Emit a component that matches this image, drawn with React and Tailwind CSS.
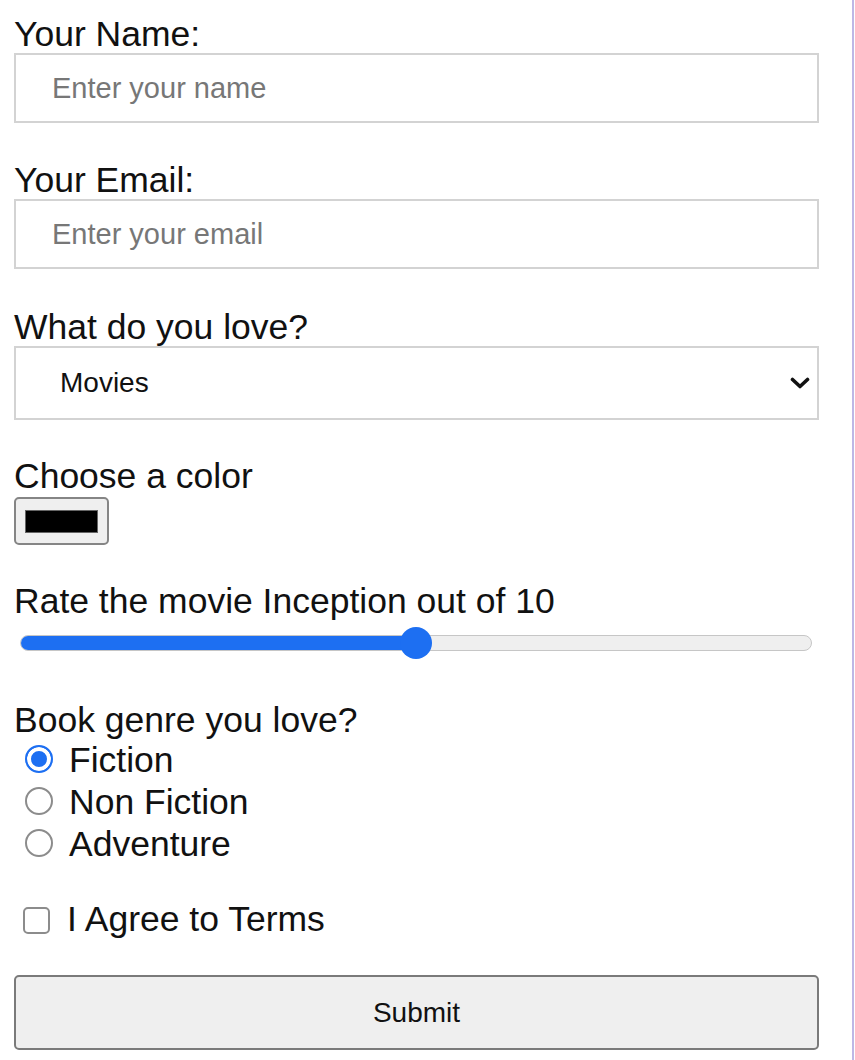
import { useState } from "react";

const Label = ({ children, className = "" }) => (
  <label className={`block h-[38px] leading-[38px] text-[35.5px] text-[#111] ${className}`}>
    {children}
  </label>
);

const Radio = ({ name, label, checked, onChange }) => (
  <label className="flex items-center h-[42px] ml-[11px]">
    <input
      type="radio"
      name={name}
      checked={checked}
      onChange={onChange}
      className="appearance-none w-[28px] h-[28px] rounded-full border-2 border-[#8c8c8c] bg-white checked:border-[#1d6ff2] checked:bg-[#1d6ff2] checked:shadow-[inset_0_0_0_4px_white]"
    />
    <span className="ml-[16px] mt-[3px] text-[35.5px] text-[#111]">{label}</span>
  </label>
);

export default function App() {
  const [genre, setGenre] = useState("fiction");
  const [agree, setAgree] = useState(false);
  const rating = 5;
  const pct = (rating / 10) * 100;

  return (
    <div
      className="w-[854px] h-[1060px] bg-white border-r-2 border-[#bdb7e6] overflow-hidden"
      style={{ fontFamily: '"Liberation Sans", Arial, sans-serif' }}
    >
      <form className="w-[819px] pl-[14px] pt-[15px] flex flex-col">
        {/* name */}
        <Label>Your Name:</Label>
        <input
          type="text"
          placeholder="Enter your name"
          className="h-[70px] w-full border-2 border-[#d3d3d3] pl-[36px] text-[29px] placeholder:text-[#777] outline-none"
        />

        {/* email */}
        <Label className="mt-[38px]">Your Email:</Label>
        <input
          type="email"
          placeholder="Enter your email"
          className="h-[70px] w-full border-2 border-[#d3d3d3] pl-[36px] text-[29px] placeholder:text-[#777] outline-none"
        />

        {/* select */}
        <Label className="mt-[39px]">What do you love?</Label>
        <div className="relative">
          <select className="appearance-none h-[74px] w-full border-2 border-[#d3d3d3] bg-white pl-[44px] text-[28px] text-[#111] outline-none">
            <option>Movies</option>
            <option>Books</option>
            <option>Music</option>
          </select>
          <svg
            className="absolute right-[9px] top-[31px] pointer-events-none"
            width="20"
            height="12"
            viewBox="0 0 20 12"
          >
            <polyline points="2.5,2.5 10,9.5 17.5,2.5" fill="none" stroke="#111" strokeWidth="3.6" strokeLinecap="round" strokeLinejoin="round" />
          </svg>
        </div>

        {/* color */}
        <Label className="mt-[37px]">Choose a color</Label>
        <button
          type="button"
          className="mt-[2px] w-[95px] h-[48px] rounded-[5px] border-2 border-[#858585] bg-[#efefef] flex items-center justify-center"
        >
          <span className="block w-[73px] h-[23px] bg-black border border-[#666]" />
        </button>

        {/* range */}
        <Label className="mt-[37px]">Rate the movie Inception out of 10</Label>
        <div className="relative mt-[6px] h-[34px] ml-[6px] w-[792px] flex items-center">
          <div className="w-full h-[16px] rounded-full bg-[#efefef] border border-[#c6c6c6] overflow-hidden">
            <div className="h-full bg-[#1d6ff2]" style={{ width: `${pct}%` }} />
          </div>
          <div
            className="absolute top-[1px] w-[32px] h-[32px] rounded-full bg-[#1d6ff2] -ml-[16px]"
            style={{ left: `${pct}%` }}
          />
        </div>

        {/* radios */}
        <label className="block mt-[42px] h-[36px] leading-[36px] text-[35.5px] text-[#111]">
          Book genre you love?
        </label>
        <Radio name="genre" label="Fiction" checked={genre === "fiction"} onChange={() => setGenre("fiction")} />
        <Radio name="genre" label="Non Fiction" checked={genre === "non"} onChange={() => setGenre("non")} />
        <Radio name="genre" label="Adventure" checked={genre === "adv"} onChange={() => setGenre("adv")} />

        {/* checkbox */}
        <label className="flex items-center h-[42px] mt-[35px] ml-[9px]">
          <input
            type="checkbox"
            checked={agree}
            onChange={() => setAgree(!agree)}
            className="appearance-none w-[27px] h-[27px] rounded-[5px] border-2 border-[#8c8c8c] bg-white checked:bg-[#1d6ff2] checked:border-[#1d6ff2]"
          />
          <span className="ml-[17px] text-[35.5px] text-[#111]">I Agree to Terms</span>
        </label>

        <button
          type="submit"
          className="mt-[34px] h-[75px] w-full rounded-[5px] border-2 border-[#7a7a7a] bg-[#efefef] text-[28px] text-[#111]"
        >
          Submit
        </button>
      </form>
    </div>
  );
}
